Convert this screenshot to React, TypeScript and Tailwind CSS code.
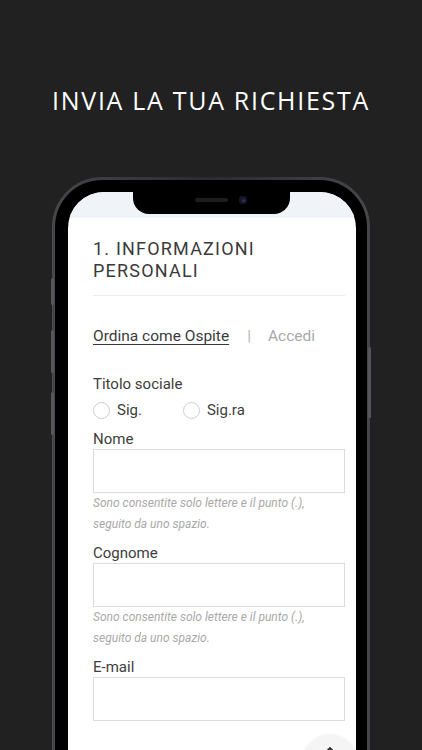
import React from "react";

const roboto = { fontFamily: "Roboto, 'Liberation Sans', sans-serif" };

interface FieldProps {
  label: string;
  help?: boolean;
}

const Field = ({ label, help }: FieldProps) => (
  <div className="mt-[8px] first:mt-0">
    <div className="text-[15px] leading-5 text-[#3d3d3d]">{label}</div>
    <div className="h-[44px] border border-[#dcdcdc] bg-white" />
    {help && (
      <p className="text-[12px] italic leading-[21px] text-[#a9a9a9]">
        Sono consentite solo lettere e il punto (.),
        <br />
        seguito da uno spazio.
      </p>
    )}
  </div>
);

const Radio = ({ label }: { label: string }) => (
  <label className="flex items-center gap-[7px]">
    <span className="h-[17px] w-[17px] rounded-full border border-[#cfcfcf] bg-white" />
    <span className="text-[15px] leading-5 text-[#3d3d3d]">{label}</span>
  </label>
);

const App = () => {
  return (
    <div className="flex h-[750px] w-[422px] flex-col items-center overflow-hidden bg-[#212121]">
      <h1
        className="pt-[85px] text-[25px] leading-[30px] tracking-[1.7px] text-white"
        style={{ fontFamily: "'Open Sans', 'Noto Sans', sans-serif" }}
      >
        INVIA LA TUA RICHIESTA
      </h1>

      {/* phone frame */}
      <div className="relative mt-[62px] h-[640px] w-[318px] shrink-0 rounded-[50px] bg-gradient-to-r from-[#46464b] via-[#2c2c30] to-[#46464b] p-[3px]">
        {/* side buttons */}
        <div className="absolute left-[-1px] top-[101px] h-[27px] w-[3px] rounded-sm bg-[#55555b]" />
        <div className="absolute left-[-1px] top-[153px] h-[43px] w-[3px] rounded-sm bg-[#55555b]" />
        <div className="absolute left-[-1px] top-[215px] h-[43px] w-[3px] rounded-sm bg-[#55555b]" />
        <div className="absolute right-[-1px] top-[170px] h-[71px] w-[3px] rounded-sm bg-[#55555b]" />

        <div className="h-full rounded-[47px] bg-black pl-[13px] pr-[11px] pt-[12px]">
          <div className="relative h-full overflow-hidden rounded-[36px] bg-white" style={roboto}>
            {/* notch */}
            <div className="absolute left-[65px] top-0 z-10 h-[22px] w-[157px] rounded-b-[16px] bg-black">
              <div className="absolute left-[62px] top-[6px] h-[4px] w-[33px] rounded-full bg-[#1e1e21]" />
              <div className="absolute left-[106px] top-[4px] flex h-[8px] w-[8px] items-center justify-center rounded-full bg-[#14172a]">
                <div className="h-[3px] w-[3px] rounded-full bg-[#2e3552]" />
              </div>
            </div>

            <div className="h-[26px] bg-[#f0f3f8]" />

            <div className="pl-[25px] pr-[11px] pt-[20px]">
              <h2 className="text-[18px] leading-[22px] tracking-[1.2px] text-[#3a3a3a]">
                1. INFORMAZIONI
                <br />
                PERSONALI
              </h2>
              <div className="mt-[13px] h-px bg-[#ececec]" />

              <div className="mt-[30px] flex items-center text-[15.5px] leading-5">
                <span className="text-[#3a3a3a] underline underline-offset-[3px]">Ordina come Ospite</span>
                <span className="ml-[18px] text-[#b5b5b5]">|</span>
                <span className="ml-[17px] text-[#a9a9a9]">Accedi</span>
              </div>

              <div className="mt-[28px] text-[15px] leading-5 text-[#3d3d3d]">Titolo sociale</div>
              <div className="mt-[6px] flex items-center gap-[41px]">
                <Radio label="Sig." />
                <Radio label="Sig.ra" />
              </div>

              <div className="mt-[9px]">
                <Field label="Nome" help />
                <Field label="Cognome" help />
                <Field label="E-mail" />
              </div>
            </div>

            {/* scroll to top */}
            <div className="absolute left-[235px] top-[542px] flex h-[54px] w-[54px] items-start justify-center rounded-full bg-[#f5f5f5] pt-[12px] shadow-sm">
              <svg width="12" height="8" viewBox="0 0 12 8" fill="none">
                <path d="M1.5 6.5 6 2l4.5 4.5" stroke="#333" strokeWidth="1.8" />
              </svg>
            </div>
          </div>
        </div>
      </div>
    </div>
  );
};

export default App;
